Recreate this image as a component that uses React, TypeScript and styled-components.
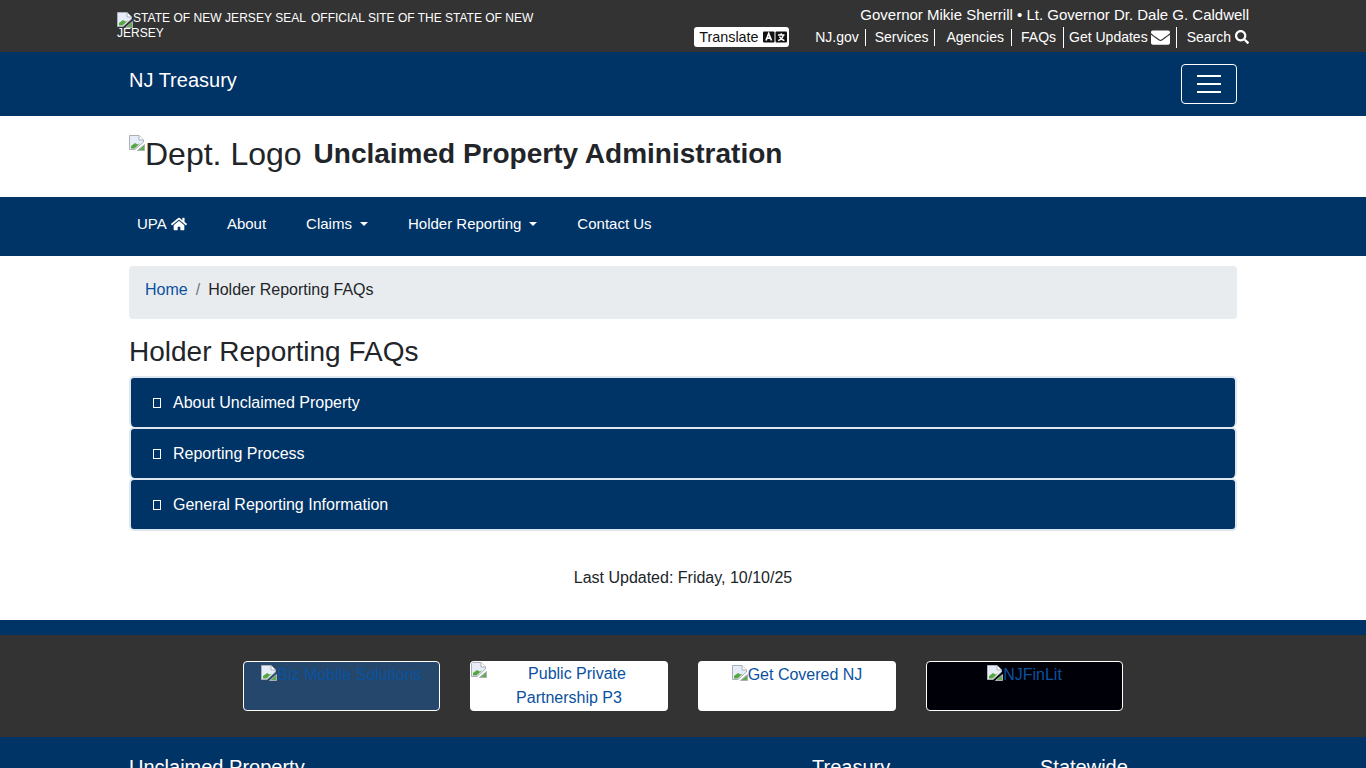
import React from "react";
import styled, { createGlobalStyle } from "styled-components";
import { FaEnvelope, FaHome, FaSearch } from "react-icons/fa";

const navy = "#003366";
const charcoal = "#333333";
const linkBlue = "#0a52a0";

const Global = createGlobalStyle`
  html, body { margin: 0; padding: 0; background: #fff; }
  body { font-family: "Liberation Sans", Arial, sans-serif; font-size: 16px; line-height: 1.5; color: #212529; }
  * { box-sizing: border-box; }
`;

const Page = styled.div`
  height: 768px;
  overflow: hidden;
`;

const TopBar = styled.div`
  background: ${charcoal};
  height: 52px;
  color: #fff;
`;

const TopInner = styled.div`
  width: 1132px;
  margin: 0 auto;
  display: flex;
  justify-content: space-between;
`;

const OfficialBlock = styled.div`
  width: 428px;
  padding-top: 11px;
  font-size: 12px;
  line-height: 15px;
  color: #fff;
  svg { vertical-align: -3px; margin: 0 0 -3px; }
`;

const SealAlt = styled.span`
  display: inline;
  margin-right: 5px;
  letter-spacing: 0.04px;
`;

const TopRight = styled.div`
  display: flex;
  flex-direction: column;
  align-items: flex-end;
`;

const Leaders = styled.div`
  font-size: 15px;
  line-height: 20px;
  margin-top: 5px;
  height: 20px;
`;

const TopLinks = styled.div`
  display: flex;
  align-items: center;
  height: 20px;
  margin-top: 2px;
  font-size: 14px;
  line-height: 20px;
`;

const TranslateButton = styled.div`
  width: 95px;
  height: 20px;
  background: #fff;
  color: #111;
  border-radius: 3px;
  display: flex;
  align-items: center;
  padding-left: 5px;
  margin-right: 26px;
  font-size: 14.4px;
`;

const TranslateGlyphs = styled.svg`
  width: 24px;
  height: 12px;
  margin-left: 4px;
`;

const TopLink = styled.span<{ $left: number; $right: number; $rule?: boolean; $tall?: boolean; $gap?: number }>`
  display: flex;
  align-items: center;
  gap: ${(p) => p.$gap ?? 4}px;
  height: ${(p) => (p.$tall ? 21 : 17)}px;
  padding-left: ${(p) => p.$left}px;
  padding-right: ${(p) => p.$right}px;
  border-right: ${(p) => (p.$rule ? "1px solid #fff" : "none")};
  white-space: nowrap;
`;

const Container = styled.div`
  width: 1108px;
  margin: 0 auto;
`;

const BrandBar = styled.div`
  background: ${navy};
  height: 64px;
`;

const BrandInner = styled(Container)`
  display: flex;
  justify-content: space-between;
  align-items: flex-start;
  padding-top: 12px;
`;

const Brand = styled.div`
  font-size: 20px;
  line-height: 30px;
  margin-top: 1px;
  color: #fff;
`;

const Hamburger = styled.div`
  width: 56px;
  height: 40px;
  border: 1px solid #fff;
  border-radius: 4px;
  display: flex;
  flex-direction: column;
  justify-content: center;
  align-items: center;
  gap: 6px;
`;

const HamburgerBar = styled.span`
  display: block;
  width: 24px;
  height: 2px;
  background: #fff;
`;

const Masthead = styled(Container)`
  height: 81px;
  padding-bottom: 6px;
  display: flex;
  align-items: center;
`;

const LogoAlt = styled.div`
  display: flex;
  align-items: flex-start;
  font-size: 32px;
  line-height: 38px;
  height: 38px;
  color: #212529;
  margin-right: 12px;
`;

const Title = styled.h1`
  margin: 0;
  font-size: 28px;
  line-height: 34px;
  font-weight: 700;
  color: #212529;
`;

const MainNav = styled.div`
  background: ${navy};
  height: 59px;
`;

const MainNavInner = styled(Container)`
  display: flex;
  align-items: center;
  height: 59px;
  padding-bottom: 6px;
  color: #fff;
`;

const NavItem = styled.span`
  display: flex;
  align-items: center;
  font-size: 15px;
  line-height: 24px;
  padding: 0 8px;
  margin-right: 24px;
  color: #fff;
  white-space: nowrap;
`;

const Caret = styled.span`
  display: inline-block;
  width: 0;
  height: 0;
  margin-left: 8px;
  border-top: 4.5px solid #fff;
  border-left: 4.5px solid transparent;
  border-right: 4.5px solid transparent;
`;

const Breadcrumb = styled.div`
  margin-top: 10px;
  height: 53px;
  background: #e9ecef;
  border-radius: 4px;
  padding: 12px 16px;
  display: flex;
`;

const Crumb = styled.span`
  color: ${linkBlue};
`;

const CrumbSep = styled.span`
  color: #6c757d;
  padding: 0 8px;
`;

const Heading = styled.h2`
  margin: 16px 0 7px;
  font-size: 28px;
  line-height: 34px;
  font-weight: 400;
  color: #212529;
`;

const Accordion = styled.div`
  display: flex;
  flex-direction: column;
`;

const AccordionRow = styled.div`
  height: 51px;
  background: ${navy};
  border: 2px solid #dfe6ee;
  border-width: 2px 2px 0 2px;
  border-radius: 5px;
  display: flex;
  align-items: center;
  padding-left: 22px;
  color: #fff;
  font-size: 16px;
  &:last-child { height: 53px; border-bottom-width: 2px; }
`;

const MissingGlyph = styled.span`
  display: inline-block;
  width: 8px;
  height: 10px;
  border: 1px solid #fff;
  margin-right: 12px;
  flex: none;
`;

const Updated = styled.p`
  margin: 35px 0 0;
  height: 24px;
  text-align: center;
  font-size: 16px;
`;

const Stripe = styled.div`
  margin-top: 30px;
  height: 15px;
  background: ${navy};
`;

const PartnerBand = styled.div`
  height: 102px;
  background: ${charcoal};
  display: flex;
  justify-content: center;
  padding-top: 26px;
  gap: 30px;
`;

const Partner = styled.div<{ $bg: string; $outline?: boolean; $w: number; $wrapped?: boolean }>`
  width: ${(p) => p.$w}px;
  height: 50px;
  background: ${(p) => p.$bg};
  border: 1px solid ${(p) => (p.$outline ? "#fff" : "transparent")};
  border-radius: 4px;
  text-align: center;
  line-height: 24px;
  color: ${linkBlue};
  font-size: 16px;
  overflow: hidden;
  padding-top: ${(p) => (p.$wrapped ? 0 : 1)}px;
  svg { float: ${(p) => (p.$wrapped ? "left" : "none")}; }
`;

const BrokenIcon = styled.svg`
  width: 16px;
  height: 16px;
  vertical-align: -1px;
  flex: none;
`;

const Footer = styled.div`
  background: ${navy};
  height: 200px;
`;

const FooterInner = styled(Container)`
  display: grid;
  grid-template-columns: 683px 228px 1fr;
  padding-top: 18px;
  color: #fff;
  font-size: 20px;
  line-height: 24px;
`;

const Broken = () => (
  <BrokenIcon viewBox="0 0 16 16" aria-hidden="true">
    <path d="M0.5 0.5H10L14.5 5V7L6 14.5H0.5Z" fill="#e6edf9" stroke="#aab0b6" />
    <path d="M10 0.5V5H14.5" fill="#ffffff" stroke="#aab0b6" />
    <path d="M2 13.5V11L6 8L8.5 9.5L11 8.5L5.5 13.5Z" fill="#58a642" />
    <path d="M8.5 15.5L15.5 9.5V15.5Z" fill="#62ab4e" stroke="#aab0b6" />
  </BrokenIcon>
);

export default function App() {
  return (
    <Page>
      <Global />
      <TopBar>
        <TopInner>
          <OfficialBlock>
            <Broken />
            <SealAlt>STATE OF NEW JERSEY SEAL</SealAlt>
            OFFICIAL SITE OF THE STATE OF NEW JERSEY
          </OfficialBlock>
          <TopRight>
            <Leaders>Governor Mikie Sherrill • Lt. Governor Dr. Dale G. Caldwell</Leaders>
            <TopLinks>
              <TranslateButton>
                Translate
                <TranslateGlyphs viewBox="0 0 24 12" aria-hidden="true">
                  <rect x="0" y="0.5" width="11.5" height="11" rx="1" fill="#111" />
                  <rect x="12.5" y="0.5" width="11.5" height="11" rx="1" fill="#111" />
                  <path d="M3 9.5L5.7 2.5L8.5 9.5M4 7.2H7.4" fill="none" stroke="#fff" strokeWidth="1.7" />
                  <path d="M15 4H21.5M18.2 2.2V4M20.3 4C19.8 6.6 17.8 8.6 15.2 9.6M16.4 5.6C17.4 7.4 19 8.8 21.4 9.6" fill="none" stroke="#fff" strokeWidth="1.4" />
                </TranslateGlyphs>
              </TranslateButton>
              <TopLink $left={0} $right={6} $rule>NJ.gov</TopLink>
              <TopLink $left={9} $right={6} $rule>Services</TopLink>
              <TopLink $left={11} $right={7} $rule>Agencies</TopLink>
              <TopLink $left={9} $right={7} $rule $tall>FAQs</TopLink>
              <TopLink $left={5} $right={6} $rule $tall $gap={3}>Get Updates <FaEnvelope size={19} /></TopLink>
              <TopLink $left={10} $right={0}>Search <FaSearch size={14} /></TopLink>
            </TopLinks>
          </TopRight>
        </TopInner>
      </TopBar>
      <BrandBar>
        <BrandInner>
          <Brand>NJ Treasury</Brand>
          <Hamburger>
            <HamburgerBar />
            <HamburgerBar />
            <HamburgerBar />
          </Hamburger>
        </BrandInner>
      </BrandBar>
      <Masthead>
        <LogoAlt>
          <Broken />
          Dept. Logo
        </LogoAlt>
        <Title>Unclaimed Property Administration</Title>
      </Masthead>
      <MainNav>
        <MainNavInner>
          <NavItem>UPA&nbsp;<FaHome size={16} /></NavItem>
          <NavItem>About</NavItem>
          <NavItem>Claims <Caret /></NavItem>
          <NavItem>Holder Reporting <Caret /></NavItem>
          <NavItem>Contact Us</NavItem>
        </MainNavInner>
      </MainNav>
      <Container>
        <Breadcrumb>
          <Crumb>Home</Crumb>
          <CrumbSep>/</CrumbSep>
          Holder Reporting FAQs
        </Breadcrumb>
        <Heading>Holder Reporting FAQs</Heading>
        <Accordion>
          <AccordionRow><MissingGlyph />About Unclaimed Property</AccordionRow>
          <AccordionRow><MissingGlyph />Reporting Process</AccordionRow>
          <AccordionRow><MissingGlyph />General Reporting Information</AccordionRow>
        </Accordion>
        <Updated>Last Updated: Friday, 10/10/25</Updated>
      </Container>
      <Stripe />
      <PartnerBand>
        <Partner $bg="#25476b" $outline $w={197}><Broken />Biz Mobile Solutions</Partner>
        <Partner $bg="#ffffff" $w={198} $wrapped><Broken />Public Private Partnership P3</Partner>
        <Partner $bg="#ffffff" $w={198}><Broken />Get Covered NJ</Partner>
        <Partner $bg="#000008" $outline $w={197}><Broken />NJFinLit</Partner>
      </PartnerBand>
      <Footer>
        <FooterInner>
          <span>Unclaimed Property</span>
          <span>Treasury</span>
          <span>Statewide</span>
        </FooterInner>
      </Footer>
    </Page>
  );
}
